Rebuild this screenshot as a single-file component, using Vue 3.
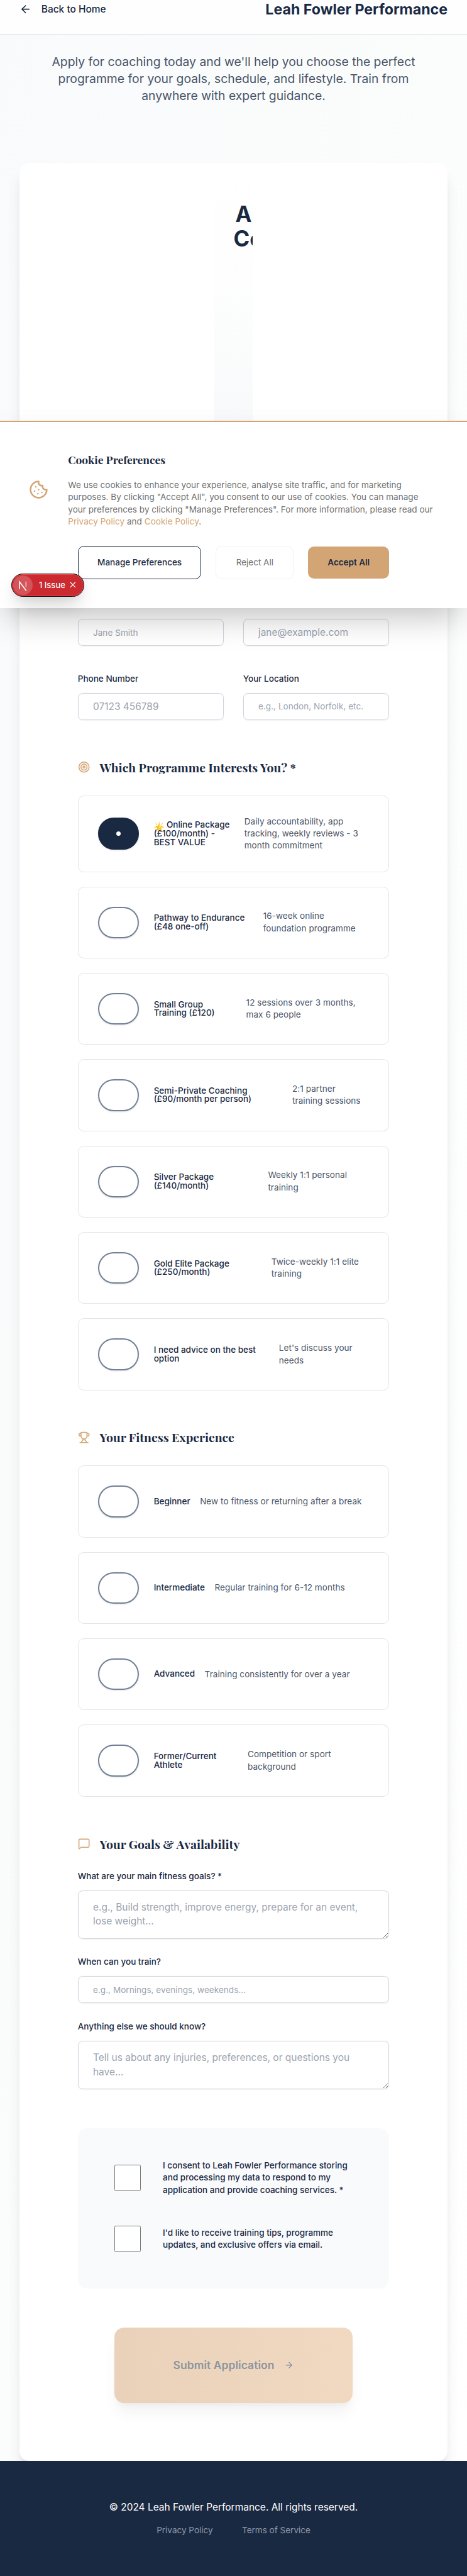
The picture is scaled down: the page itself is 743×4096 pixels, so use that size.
<script setup>
const programmes = [
  { label: 'Online Package\n(£100/month) -\nBEST VALUE', star: true, text: 'Daily accountability, app\ntracking, weekly reviews - 3\nmonth commitment', width: 133, checked: true },
  { label: 'Pathway to Endurance\n(£48 one-off)', text: '16-week online\nfoundation programme', width: 164 },
  { label: 'Small Group\nTraining (£120)', text: '12 sessions over 3 months,\nmax 6 people', width: 136 },
  { label: 'Semi-Private Coaching\n(£90/month per person)', text: '2:1 partner\ntraining sessions', width: 212 },
  { label: 'Silver Package\n(£140/month)', text: 'Weekly 1:1 personal\ntraining', width: 172 },
  { label: 'Gold Elite Package\n(£250/month)', text: 'Twice-weekly 1:1 elite\ntraining', width: 177.5 },
  { label: 'I need advice on the best\noption', text: "Let's discuss your\nneeds", width: 190 },
]
const levels = [
  { label: 'Beginner', text: 'New to fitness or returning after a break' },
  { label: 'Intermediate', text: 'Regular training for 6-12 months' },
  { label: 'Advanced', text: 'Training consistently for over a year' },
  { label: 'Former/Current\nAthlete', text: 'Competition or sport\nbackground', width: 138.5 },
]
const widthOf = (o) => (o.width ? { width: o.width + 'px' } : {})
</script>

<template>
  <div class="page">
    <header class="topbar">
      <a class="back">
        <svg class="i20" viewBox="0 0 24 24"><path d="m12 19-7-7 7-7" /><path d="M19 12H5" /></svg>
        <span>Back to Home</span>
      </a>
      <div class="brand">Leah Fowler Performance</div>
    </header>

    <p class="intro">Apply for coaching today and we'll help you choose the perfect<br />programme for your goals, schedule, and lifestyle. Train from<br />anywhere with expert guidance.</p>

    <main class="card">
      <div class="strip"><h1>A<br />Co</h1></div>

      <form class="form">
        <div class="grid">
          <div class="field"><label>Full Name *</label><input class="small" placeholder="Jane Smith" /></div>
          <div class="field"><label>Email Address *</label><input placeholder="jane@example.com" /></div>
          <div class="field"><label>Phone Number</label><input placeholder="07123 456789" /></div>
          <div class="field"><label>Your Location</label><input class="small" placeholder="e.g., London, Norfolk, etc." /></div>
        </div>

        <h2>
          <svg class="i20" viewBox="0 0 24 24"><circle cx="12" cy="12" r="10" /><circle cx="12" cy="12" r="6" /><circle cx="12" cy="12" r="2" /></svg>
          <span>Which Programme Interests You? *</span>
        </h2>
        <div class="options">
          <div v-for="o in programmes" :key="o.label" class="option">
            <span class="radio" :class="{ on: o.checked }"><i v-if="o.checked"></i></span>
            <span class="olabel" :style="widthOf(o)"><svg v-if="o.star" class="star" viewBox="0 0 18 20">
              <g stroke="#fbd75f" stroke-width="1.3" stroke-linecap="round"><path d="M9 1v3M3 3l2 3M15 3l-2 3M1 10l3 1M17 10l-3 1M4 17l1-2M14 17l-1-2M9 19v-2" /></g>
              <path d="M9 3l2.100 4.500 5 .5-3.700 3.500 1 5L9 14.200l-4.400 2.300 1-5L1.900 8l5-.5z" fill="#fcc21b" />
              <path d="M9 5.500l1.200 3 2.800.4-2.200 1.900.3 2L9 11.600z" fill="#fde98a" />
            </svg>{{ o.label }}</span>
            <span class="otext">{{ o.text }}</span>
          </div>
        </div>

        <h2>
          <svg class="i20" viewBox="0 0 24 24"><path d="M6 9H4.500a2.500 2.500 0 0 1 0-5H6" /><path d="M18 9h1.500a2.500 2.500 0 0 0 0-5H18" /><path d="M4 22h16" /><path d="M10 14.660V17c0 .55-.47.98-.97 1.210C7.850 18.750 7 20.240 7 22" /><path d="M14 14.660V17c0 .55.47.98.97 1.210C16.150 18.750 17 20.240 17 22" /><path d="M18 9V3a1 1 0 0 0-1-1H7a1 1 0 0 0-1 1v6a6 6 0 0 0 12 0Z" /></svg>
          <span>Your Fitness Experience</span>
        </h2>
        <div class="options">
          <div v-for="o in levels" :key="o.label" class="option">
            <span class="radio"></span>
            <span class="olabel" :style="widthOf(o)">{{ o.label }}</span>
            <span class="otext">{{ o.text }}</span>
          </div>
        </div>

        <h2>
          <svg class="i20" viewBox="0 0 24 24"><path d="M22 17a2 2 0 0 1-2 2H6.828a2 2 0 0 0-1.414.586l-2.202 2.202A.71.71 0 0 1 2 21.286V5a2 2 0 0 1 2-2h16a2 2 0 0 1 2 2z" /></svg>
          <span>Your Goals &amp; Availability</span>
        </h2>
        <div class="stack">
          <div class="field"><label>What are your main fitness goals? *</label><textarea placeholder="e.g., Build strength, improve energy, prepare for an event, lose weight..."></textarea></div>
          <div class="field"><label>When can you train?</label><input class="small" placeholder="e.g., Mornings, evenings, weekends..." /></div>
          <div class="field"><label>Anything else we should know?</label><textarea placeholder="Tell us about any injuries, preferences, or questions you have..."></textarea></div>
        </div>

        <div class="consent">
          <div class="crow"><input type="checkbox" /><p>I consent to Leah Fowler Performance storing<br />and processing my data to respond to my<br />application and provide coaching services. *</p></div>
          <div class="crow"><input type="checkbox" /><p>I'd like to receive training tips, programme<br />updates, and exclusive offers via email.</p></div>
        </div>

        <button type="button" class="submit">
          <span>Submit Application</span>
          <svg viewBox="0 0 24 24"><path d="M5 12h14" /><path d="m12 5 7 7-7 7" /></svg>
        </button>
      </form>
    </main>

    <footer class="footer">
      <p>© 2024 Leah Fowler Performance. All rights reserved.</p>
      <nav><a>Privacy Policy</a><a>Terms of Service</a></nav>
    </footer>

    <section class="cookie">
      <div class="cbody">
        <svg class="cicon" viewBox="0 0 24 24"><path d="M12 2a10 10 0 1 0 10 10 4 4 0 0 1-5-5 4 4 0 0 1-5-5" /><path d="M8.500 8.500v.01M16 15.500v.01M12 12v.01M11 17v.01M7 14v.01" /></svg>
        <div class="ctext">
          <h3>Cookie Preferences</h3>
          <p>We use cookies to enhance your experience, analyse site traffic, and for marketing<br />purposes. By clicking "Accept All", you consent to our use of cookies. You can manage<br />your preferences by clicking "Manage Preferences". For more information, please read our<br /><a>Privacy Policy</a> and <a>Cookie Policy</a>.</p>
        </div>
      </div>
      <div class="cbtns">
        <button type="button" class="manage">Manage Preferences</button>
        <button type="button" class="reject">Reject All</button>
        <button type="button" class="accept">Accept All</button>
      </div>
    </section>

    <div class="issue">
      <span class="n"><svg viewBox="0 0 32 32"><path d="M10.500 22V10.500L21.500 25" fill="none" stroke="#fff" stroke-width="1.700" /><path d="M21 10v9" stroke="#fff" stroke-width="1.600" opacity=".7" /></svg></span>
      <span class="itext">1 Issue</span>
      <svg class="x" viewBox="0 0 10 10"><path d="M1 1l8 8M9 1L1 9" /></svg>
    </div>
  </div>
</template>

<style>
html, body { margin: 0; background: #fff; }
</style>

<style scoped>
* { box-sizing: border-box; margin: 0; padding: 0; }
.page {
  zoom: 0.9669;
  position: relative;
  height: 4236px;
  overflow: hidden;
  display: flex;
  flex-direction: column;
  font-family: Inter, "Liberation Sans", sans-serif;
  color: #1a2942;
  background: linear-gradient(to bottom right, #f8fafc, #fbfdfc, #fff);
}
svg { fill: none; stroke: currentColor; stroke-width: 2; stroke-linecap: round; stroke-linejoin: round; flex: none; }
.i20 { width: 20px; height: 20px; }
.topbar {
  height: 57px; flex: none; padding: 0 32px 25px; background: #fefefe;
  border-bottom: 1px solid #e4e4ea;
  display: flex; align-items: center; justify-content: space-between;
}
.back { display: flex; align-items: center; gap: 16px; font-size: 16px; font-weight: 500; }
.brand { font-size: 24px; font-weight: 700; line-height: 32px; white-space: nowrap; }
.intro { margin-top: 31px; height: 84px; text-align: center; font-size: 20px; line-height: 28px; color: #4a5568; white-space: nowrap; }
.card {
  margin: 96px 32px 0; height: 3779px; flex: none; border-radius: 16px; background: #fff;
  box-shadow: 0 20px 25px -5px rgba(0,0,0,.1), 0 8px 10px -6px rgba(0,0,0,.1);
}
.strip {
  width: 64px; height: 452px; margin: 0 auto; padding: 64px 0 0 32px; overflow: hidden;
  background: linear-gradient(#fff, #fefefe 30%, #fbfdfc 65%, #f9fafc 85%, #f7f9fb);
}
h1 { width: 60px; font-size: 36px; line-height: 40px; font-weight: 700; white-space: nowrap; text-indent: 3px; }
.form { margin-top: 268px; padding: 0 96px; display: flex; flex-direction: column; }
.grid { display: grid; grid-template-columns: 240px 240px; column-gap: 32px; row-gap: 48px; }
.field { display: flex; flex-direction: column; gap: 16px; }
label { font-size: 14px; line-height: 14px; font-weight: 500; }
.field input, textarea {
  width: 100%; border: 1px solid #cfd4dc; border-radius: 8px; background: transparent;
  padding: 0 24px; height: 44px; font-family: inherit; font-size: 16px; color: inherit;
  box-shadow: 0 1px 2px rgba(0,0,0,.06); outline: none;
}
.field input.small { font-size: 14px; letter-spacing: .05px; }
.field textarea { display: block; height: 79.700px; padding: 16px 24px; line-height: 22.860px; overflow: hidden; resize: vertical; }
::placeholder { color: #9ca3af; opacity: 1; }
h2 {
  margin: 64px 0 32px; height: 28px; display: flex; align-items: center; gap: 16px; white-space: nowrap;
  font-family: "Playfair Display", "Liberation Serif", serif; font-size: 20px; font-weight: 700; line-height: 28px;
}
h2 svg, .cicon { color: #d4a574; }
.options { display: flex; flex-direction: column; gap: 24px; }
.option {
  min-height: 118px; padding: 32px; border: 1px solid #e3e5e9; border-radius: 10px;
  display: flex; align-items: center; font-size: 14px;
}
.radio {
  width: 68px; height: 52px; flex: none; border: 2.100px solid #718096; border-radius: 26px;
  margin-right: 24px; display: flex; align-items: center; justify-content: center;
  box-shadow: 0 1px 3px rgba(0,0,0,.12);
}
.radio.on { background: #1a2942; border-color: #1a2942; }
.radio i { width: 8px; height: 8px; border-radius: 50%; background: #fff; }
.olabel { flex: none; font-weight: 500; line-height: 14px; white-space: pre; margin-right: 16px; }
.star { width: 17px; height: 19px; margin: -5px 4px -5px 0; vertical-align: -4px; stroke: none; }
.otext { flex: none; line-height: 20px; color: #4a5568; white-space: pre; letter-spacing: .06px; }
.stack { display: flex; flex-direction: column; gap: 32px; }
.consent {
  margin-top: 64px; height: 264px; padding: 52px 60px 60px; border-radius: 16px; background: #f9fafc;
  display: flex; flex-direction: column; gap: 48px;
}
.crow { display: flex; align-items: center; gap: 36px; }
.crow input { appearance: none; flex: none; width: 44px; height: 44px; border: 1px solid #767676; border-radius: 2.500px; background: #fff; }
.crow p { font-size: 14px; line-height: 20px; font-weight: 500; white-space: nowrap; }
button { font-family: inherit; border: 0; }
.submit {
  margin: 64px 60px 0; height: 124px; border-radius: 16px; color: #8c94a0; font-size: 18px; font-weight: 600;
  background: linear-gradient(to right, #e9d2b9, #f1d9c1);
  box-shadow: 0 20px 25px -5px rgba(0,0,0,.05), 0 8px 10px -6px rgba(0,0,0,.05);
  display: flex; align-items: center; justify-content: center; gap: 16px; letter-spacing: .1px;
}
.submit svg { width: 16px; height: 16px; }
.footer { height: 189px; flex: none; background: #1a2942; color: #fff; padding-top: 64px; text-align: center; position: relative; }
.footer p { font-size: 16px; line-height: 24px; }
.footer nav { margin-top: 16px; display: flex; justify-content: center; gap: 48px; font-size: 14px; line-height: 20px; color: #8f98a6; }
.cookie {
  position: absolute; left: 0; right: 0; top: 692px; height: 308px; background: #fff;
  border-top: 2.100px solid #d4a574; box-shadow: 0 25px 50px -12px rgba(0,0,0,.25);
  padding: 50px 48px 0;
}
.cbody { display: flex; align-items: center; gap: 32px; height: 122px; }
.cicon { width: 32px; height: 32px; }
h3 { font-family: "Playfair Display", "Liberation Serif", serif; font-size: 18px; line-height: 26px; font-weight: 700; height: 26px; margin-bottom: 20px; white-space: nowrap; }
.ctext { height: 126px; }
.ctext p { font-size: 14px; line-height: 20px; color: #6f6f6f; white-space: nowrap; letter-spacing: .03px; }
.ctext a { color: #d4a574; }
.cbtns { margin-top: 32px; display: flex; justify-content: center; align-items: center; gap: 24px; }
.cbtns button { height: 54px; border-radius: 10px; font-size: 14px; font-weight: 500; white-space: nowrap; background: #fff; }
.cbtns .manage { width: 203px; border: 1px solid #1a2942; color: #1a2942; }
.cbtns .reject { width: 128px; border: 1px solid #f1f2f4; color: #6f6f6f; font-weight: 400; }
.cbtns .accept { width: 133px; height: 52px; background: #d4a574; color: #1a2942; font-weight: 600; }
.issue {
  position: absolute; left: 19px; top: 943px; width: 120px; height: 38px; border-radius: 19px;
  background: #ca2a30; border: 1px solid #17171a; color: #fff; display: flex; align-items: center;
  box-shadow: inset 0 0 0 1px #e5484d, 0 16px 32px -8px rgba(0,0,0,.24), 0 4px 12px rgba(0,0,0,.05);
}
.n { width: 32px; height: 32px; margin-left: 2px; border-radius: 50%; background: rgba(255,255,255,.2); }
.n svg { display: block; width: 32px; height: 32px; stroke-linecap: butt; stroke-linejoin: miter; }
.itext { width: 42px; margin-left: 10px; font-size: 13.500px; font-weight: 500; white-space: nowrap; }
.x { width: 10px; height: 10px; margin-left: 9px; stroke-width: 1.200; }
</style>
